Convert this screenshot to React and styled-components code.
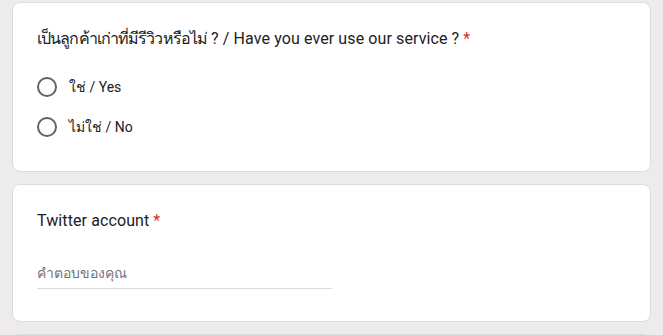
import React from "react";
import styled, { createGlobalStyle } from "styled-components";

const Global = createGlobalStyle`
  html, body { margin: 0; padding: 0; background: #edebec; }
  body { font-family: Roboto, "Noto Sans", Arial, sans-serif; color: #202124; }
`;

const Page = styled.div`
  display: flex;
  flex-direction: column;
  gap: 12px;
  padding: 2px 12px 0;
  height: 335px;
  overflow: hidden;
  box-sizing: border-box;
`;

const Card = styled.section`
  background: #fff;
  border: 1px solid #dadce0;
  border-radius: 8px;
  padding: 24px 24px ${(p) => p.$pb || 24}px;
  flex-shrink: 0;
  min-height: ${(p) => p.$minH || 0}px;
`;

const Title = styled.div`
  font-size: 16px;
  line-height: 24px;
  letter-spacing: 0.1px;
  color: #202124;
`;

const Thai = styled.span`
  letter-spacing: -0.9px;
`;

const Req = styled.span`
  color: #d93025;
  margin-left: 4px;
`;

const Options = styled.div`
  display: flex;
  flex-direction: column;
  margin-top: 16px;
`;

const Option = styled.label`
  display: flex;
  align-items: center;
  height: 40px;
  gap: 12px;
  font-size: 14px;
  color: #202124;
  cursor: pointer;
`;

const Radio = styled.span`
  width: 20px;
  height: 20px;
  box-sizing: border-box;
  border: 2px solid #5f6368;
  border-radius: 50%;
  flex-shrink: 0;
`;

const Field = styled.div`
  margin-top: 24px;
  width: 295px;
  height: 32px;
  display: flex;
  align-items: center;
  border-bottom: 1px solid #dadce0;
  box-sizing: border-box;
  font-size: 14px;
  color: #70757a;
`;

export default function App() {
  return (
    <>
      <Global />
      <Page>
        <Card>
          <Title>
            <Thai>เป็นลูกค้าเก่าที่มีรีวิวหรือไม่</Thai> ? / Have you ever use our service ?
            <Req>*</Req>
          </Title>
          <Options>
            <Option>
              <Radio />
              ใช่ / Yes
            </Option>
            <Option>
              <Radio />
              ไม่ใช่ / No
            </Option>
          </Options>
        </Card>
        <Card $pb={32}>
          <Title>
            Twitter account<Req>*</Req>
          </Title>
          <Field>คำตอบของคุณ</Field>
        </Card>
        <Card $minH={60} />
      </Page>
    </>
  );
}
